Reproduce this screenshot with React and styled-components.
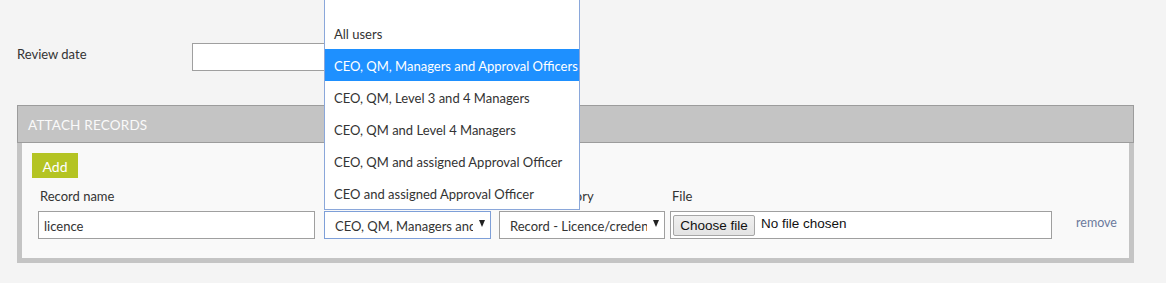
import React from "react";
import styled, { createGlobalStyle } from "styled-components";

const GlobalStyle = createGlobalStyle`
  html, body {
    margin: 0;
    padding: 0;
    background: #f4f4f4;
    font-family: "Lato", "Open Sans", sans-serif;
    font-size: 13px;
    color: #333;
    overflow: hidden;
  }
`;

const ACCESS_OPTIONS = [
  "",
  "All users",
  "CEO, QM, Managers and Approval Officers",
  "CEO, QM, Level 3 and 4 Managers",
  "CEO, QM and Level 4 Managers",
  "CEO, QM and assigned Approval Officer",
  "CEO and assigned Approval Officer",
];

const Page = styled.div`
  width: 1166px;
  height: 283px;
  box-sizing: border-box;
  padding: 43px 32px 0 17px;
`;

const FieldRow = styled.div`
  display: flex;
  align-items: flex-start;
  height: 28px;
`;

const FieldLabel = styled.label`
  width: 175px;
  flex: none;
  line-height: 16px;
  margin-top: 3px;
`;

const TextInput = styled.div`
  box-sizing: border-box;
  width: ${(p) => p.$width}px;
  height: 28px;
  background: #fff;
  border: 1px solid #9f9f9f;
  display: flex;
  align-items: center;
  padding: 1px 5px 0;
  flex: none;
`;

const Panel = styled.section`
  margin-top: 34px;
`;

const PanelHeader = styled.header`
  box-sizing: border-box;
  height: 38px;
  background: #c4c4c4;
  border: 1px solid #9c9c9c;
  color: #fafafa;
  display: flex;
  align-items: center;
  padding: 1px 10px 0;
  font-size: 13.5px;
  letter-spacing: 0.2px;
  text-transform: uppercase;
`;

const PanelBody = styled.div`
  background: #f9f9f9;
  border: 5px solid #c4c4c4;
  border-top: none;
  padding: 10px 10px 19px;
`;

const AddButton = styled.button`
  height: 25px;
  width: 46px;
  border: none;
  background: #b4c423;
  color: #fff;
  font-family: inherit;
  font-size: 14px;
  padding: 1px 0 0;
`;

const RecordRow = styled.div`
  display: flex;
  align-items: flex-end;
  padding-left: 6px;
  margin-top: 10px;
`;

const Column = styled.div`
  display: flex;
  flex-direction: column;
  margin-right: ${(p) => p.$gap || 0}px;
  flex: none;
  position: relative;
`;

const ColLabel = styled.div`
  height: 23px;
  padding-left: 2px;
  line-height: 16px;
`;

const SelectBox = styled.div`
  box-sizing: border-box;
  width: ${(p) => p.$width}px;
  height: 28px;
  background: #fff;
  border: 1px solid ${(p) => (p.$open ? "#7e9fd8" : "#9f9f9f")};
  display: flex;
  align-items: center;
  padding: 1px 5px 0 10px;
  position: relative;
`;

const SelectText = styled.span`
  flex: 1;
  overflow: hidden;
  white-space: nowrap;
`;

const Arrow = styled.span`
  width: 0;
  height: 0;
  border-left: 3.5px solid transparent;
  border-right: 3.5px solid transparent;
  border-top: 7px solid #222;
  margin: 0 0 5px 6px;
`;

const Dropdown = styled.ul`
  position: absolute;
  left: -1px;
  bottom: 28px;
  width: 256px;
  box-sizing: border-box;
  margin: 0;
  padding: 0;
  list-style: none;
  background: #fff;
  border: 1px solid #8aa7da;
  z-index: 5;
`;

const Option = styled.li`
  height: 32px;
  box-sizing: border-box;
  display: flex;
  align-items: center;
  padding: 2px 9px 0;
  white-space: nowrap;
  background: ${(p) => (p.$active ? "#1e90ff" : "#fff")};
  color: ${(p) => (p.$active ? "#fff" : "#333")};
`;

const FileBox = styled.div`
  box-sizing: border-box;
  width: 382px;
  height: 28px;
  background: #fff;
  border: 1px solid #9f9f9f;
  display: flex;
  align-items: center;
  padding: 0 2px;
  font-family: "Liberation Sans", Arial, sans-serif;
  font-size: 13.5px;
  color: #111;
`;

const ChooseButton = styled.span`
  box-sizing: border-box;
  height: 21px;
  width: 82px;
  display: flex;
  align-items: center;
  justify-content: center;
  background: linear-gradient(#f0f0f0, #e3e3e3);
  border: 1px solid #a6a6a6;
  border-radius: 2px;
  margin-right: 6px;
`;

const NoFile = styled.span`
  margin-bottom: 3px;
`;

const RemoveLink = styled.a`
  margin: 0 0 9px 24px;
  color: #6b7a9c;
  font-size: 12.5px;
  text-decoration: none;
`;

export default function App() {
  return (
    <>
      <GlobalStyle />
      <Page>
        <FieldRow>
          <FieldLabel>Review date</FieldLabel>
          <TextInput $width={280} />
        </FieldRow>

        <Panel>
          <PanelHeader>Attach records</PanelHeader>
          <PanelBody>
            <AddButton>Add</AddButton>
            <RecordRow>
              <Column $gap={9}>
                <ColLabel>Record name</ColLabel>
                <TextInput $width={277}>licence</TextInput>
              </Column>
              <Column $gap={8}>
                <ColLabel>Access</ColLabel>
                <SelectBox $width={167} $open>
                  <SelectText>CEO, QM, Managers and Approval Officers</SelectText>
                  <Arrow />
                  <Dropdown>
                    {ACCESS_OPTIONS.map((opt, i) => (
                      <Option key={i} $active={i === 2}>
                        {opt}
                      </Option>
                    ))}
                  </Dropdown>
                </SelectBox>
              </Column>
              <Column $gap={5}>
                <ColLabel>Record category</ColLabel>
                <SelectBox $width={166}>
                  <SelectText>Record - Licence/credentials</SelectText>
                  <Arrow />
                </SelectBox>
              </Column>
              <Column>
                <ColLabel>File</ColLabel>
                <FileBox>
                  <ChooseButton>Choose file</ChooseButton>
                  <NoFile>No file chosen</NoFile>
                </FileBox>
              </Column>
              <RemoveLink href="#">remove</RemoveLink>
            </RecordRow>
          </PanelBody>
        </Panel>
      </Page>
    </>
  );
}
